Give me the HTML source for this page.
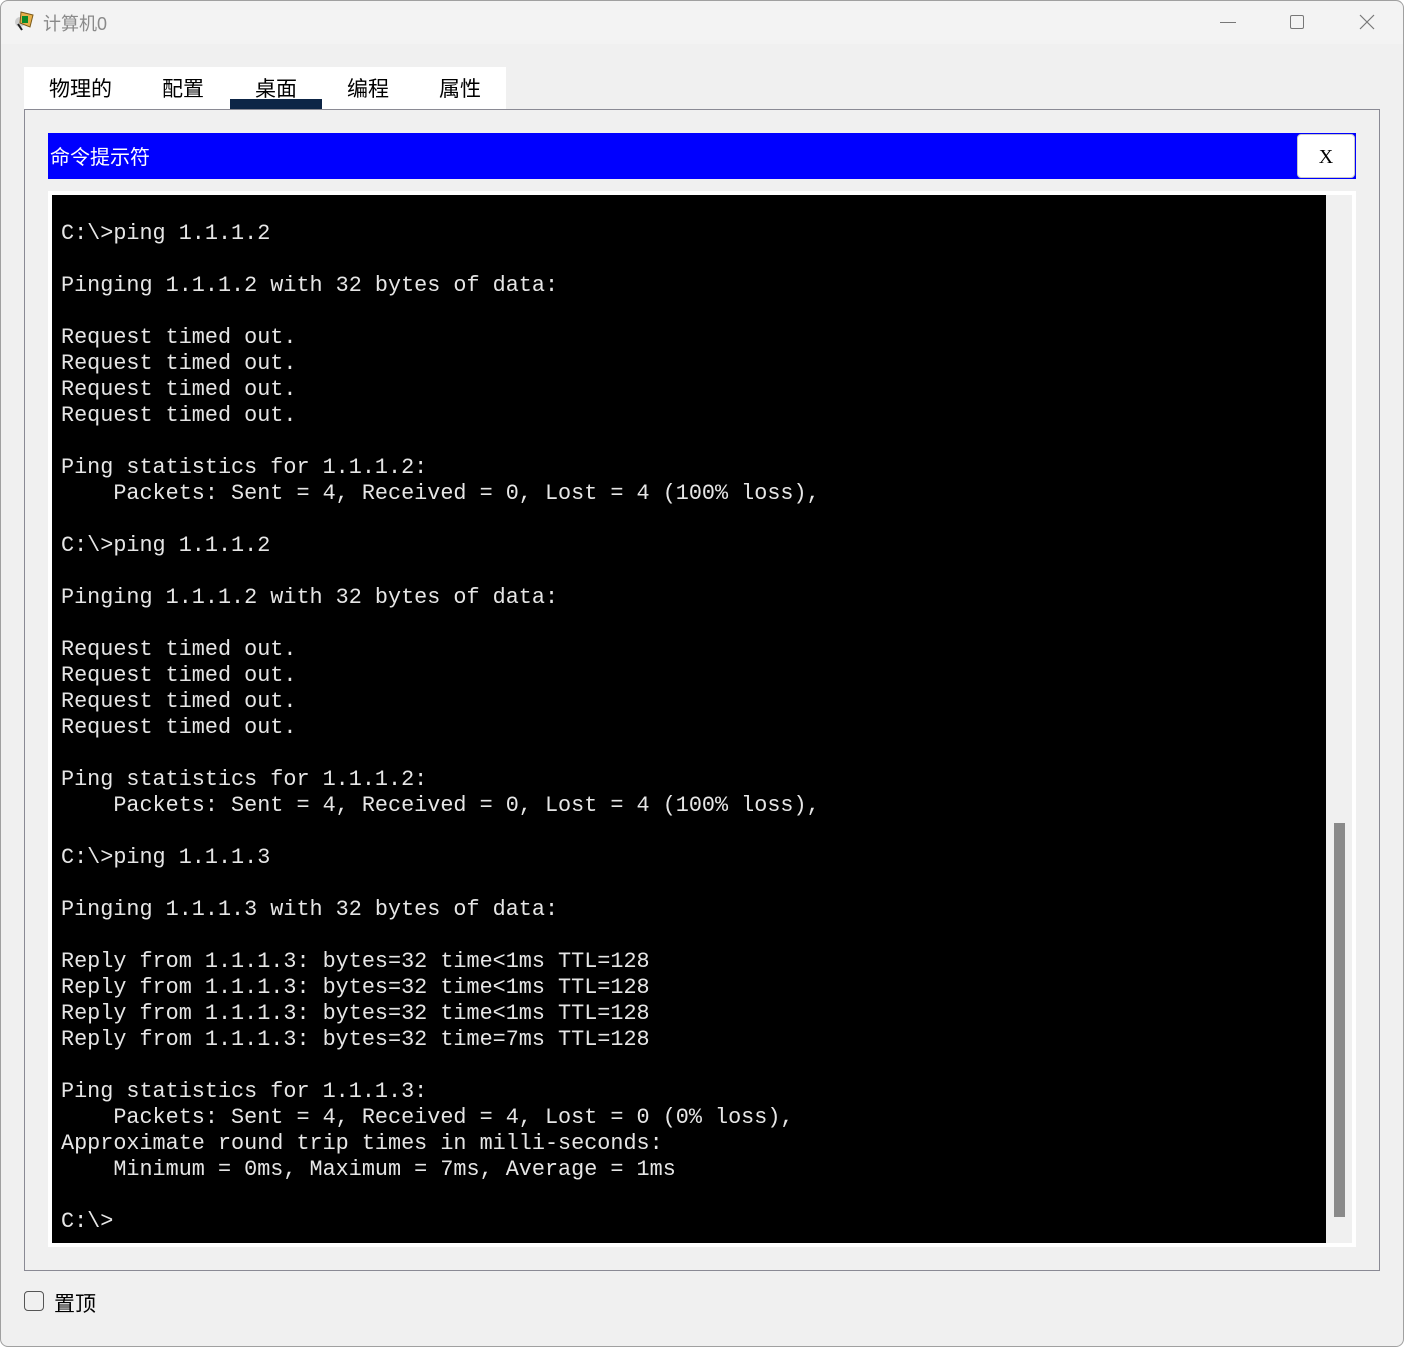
<!DOCTYPE html>
<html><head><meta charset="utf-8"><style>
*{margin:0;padding:0;box-sizing:border-box}
body{width:1404px;height:1347px;background:#fff;position:relative;overflow:hidden;font-family:"Liberation Sans","Noto Sans CJK SC",sans-serif}
.win{position:absolute;left:0;top:0;width:1404px;height:1347px;background:#f0f0f0;border-radius:8px;overflow:hidden}
.edge{position:absolute;left:0;top:0;width:1404px;height:1347px;border:1px solid #a0a0a0;border-radius:8px;pointer-events:none}
.title{position:absolute;left:0;top:0;width:100%;height:44px;background:#f3f3f3}
.title span{position:absolute;left:43px;top:10px;font-size:18px;color:#8a8a8a}
.tabs{position:absolute;left:24px;top:67px;width:482px;height:42px;background:#fff}
.tab{position:absolute;top:6px;font-size:21px;color:#000}
.ul{position:absolute;left:230px;top:99px;width:92px;height:10px;background:#0d2546}
.panel{position:absolute;left:24px;top:109px;width:1356px;height:1162px;border:1px solid #8a8a94;background:#f0f0f0}
.bar{position:absolute;left:48px;top:133px;width:1308px;height:46px;background:#0000ff}
.bar span{position:absolute;left:2px;top:8px;color:#fff;font-size:20px}
.xb{position:absolute;left:1297px;top:134px;width:58px;height:44px;background:#fff;border:1px solid #c8c8c8;border-radius:4px;text-align:center;line-height:44px;font-family:"Liberation Serif",serif;font-size:20px}
.frame{position:absolute;left:48px;top:191px;width:1308px;height:1056px;background:#fff}
.term{position:absolute;left:52px;top:195px;width:1274px;height:1048px;background:#000}
.sb{position:absolute;left:1326px;top:195px;width:26px;height:1048px;background:#f0f0f0}
.thumb{position:absolute;left:1334px;top:823px;width:11px;height:394px;background:#8a8a8a}
pre{position:absolute;left:61px;top:221px;font-family:"Liberation Mono",monospace;font-size:21.8px;line-height:26px;color:#e6e6e6}
.cb{position:absolute;left:24px;top:1291px;width:20px;height:20px;border:1px solid #555;border-radius:4px;background:#f0f0f0}
.cbl{position:absolute;left:54px;top:1288px;font-size:21px}
</style></head><body>
<div class="win">
<div class="title">
<svg style="position:absolute;left:13px;top:10px" width="24" height="24" viewBox="0 0 24 24"><circle cx="7" cy="12" r="5" fill="#ccc"/><path d="M8 2l12 3-3 12-10-4z" fill="#e8b04a" stroke="#7a5a1a"/><rect x="9" y="6" width="6" height="7" fill="#0a8a2a"/><path d="M5 14l4 6" stroke="#222" stroke-width="2"/></svg>
<span>计算机0</span>
<div style="position:absolute;left:1220px;top:22px;width:16px;height:1px;background:#777"></div>
<div style="position:absolute;left:1290px;top:15px;width:14px;height:14px;border:1px solid #777;border-radius:2px"></div>
<svg style="position:absolute;left:1359px;top:14px" width="16" height="16"><path d="M1 1L15 15M15 1L1 15" stroke="#777" stroke-width="1.2"/></svg>
</div>
<div class="tabs">
<span class="tab" style="left:25px">物理的</span>
<span class="tab" style="left:138px">配置</span>
<span class="tab" style="left:231px">桌面</span>
<span class="tab" style="left:323px">编程</span>
<span class="tab" style="left:415px">属性</span>
</div>
<div class="ul"></div>
<div class="panel"></div>
<div class="bar"><span>命令提示符</span></div>
<div class="xb">X</div>
<div class="frame"></div>
<div class="term"></div>
<div class="sb"></div>
<div class="thumb"></div>
<pre>C:\>ping 1.1.1.2

Pinging 1.1.1.2 with 32 bytes of data:

Request timed out.
Request timed out.
Request timed out.
Request timed out.

Ping statistics for 1.1.1.2:
    Packets: Sent = 4, Received = 0, Lost = 4 (100% loss),

C:\>ping 1.1.1.2

Pinging 1.1.1.2 with 32 bytes of data:

Request timed out.
Request timed out.
Request timed out.
Request timed out.

Ping statistics for 1.1.1.2:
    Packets: Sent = 4, Received = 0, Lost = 4 (100% loss),

C:\>ping 1.1.1.3

Pinging 1.1.1.3 with 32 bytes of data:

Reply from 1.1.1.3: bytes=32 time&lt;1ms TTL=128
Reply from 1.1.1.3: bytes=32 time&lt;1ms TTL=128
Reply from 1.1.1.3: bytes=32 time&lt;1ms TTL=128
Reply from 1.1.1.3: bytes=32 time=7ms TTL=128

Ping statistics for 1.1.1.3:
    Packets: Sent = 4, Received = 4, Lost = 0 (0% loss),
Approximate round trip times in milli-seconds:
    Minimum = 0ms, Maximum = 7ms, Average = 1ms

C:\></pre>
<div class="cb"></div>
<span class="cbl">置顶</span>
</div>
<div class="edge"></div>
</body></html>
